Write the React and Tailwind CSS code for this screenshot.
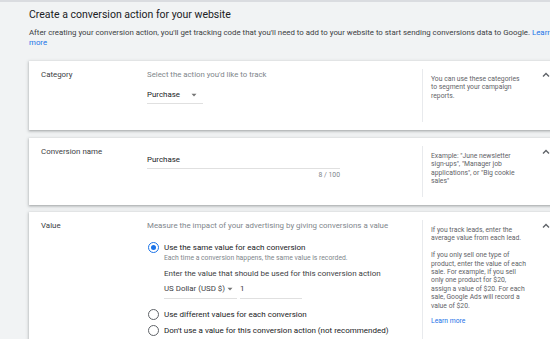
import React from "react";

function Chevron() {
  return (
    <svg width="8" height="6" viewBox="0 0 8 6" className="block">
      <polyline points="1,4.5 4,1.5 7,4.5" fill="none" stroke="#5f6368" strokeWidth="1.4" />
    </svg>
  );
}

function Caret() {
  return (
    <svg width="6" height="4" viewBox="0 0 6 4" className="block">
      <polygon points="0.5,0.8 5.5,0.8 3,3.4" fill="#757575" />
    </svg>
  );
}

function Radio({ checked }) {
  return checked ? (
    <span className="flex h-[11px] w-[11px] shrink-0 items-center justify-center rounded-full border-[1.5px] border-[#1a73e8]">
      <span className="h-[5px] w-[5px] rounded-full bg-[#1a73e8]" />
    </span>
  ) : (
    <span className="h-[11px] w-[11px] shrink-0 rounded-full border-[1.5px] border-[#5f6368]" />
  );
}

function Card({ label, children, help, className }) {
  return (
    <div
      className={
        "flex w-[560px] bg-white shadow-[0_1px_2px_rgba(60,64,67,0.3),0_1px_3px_1px_rgba(60,64,67,0.15)] " +
        className
      }
    >
      <div className="w-[118px] shrink-0 pl-[12px] pt-[9px] text-[7.9px] leading-[10px] text-[#3c4043]">{label}</div>
      <div className="w-[275px] shrink-0">{children}</div>
      <div className="my-[8px] w-[112px] shrink-0 border-l border-[#e8eaed] pl-[8px] pt-[6px] text-[6.8px] leading-[8.4px] text-[#5f6368]">
        {help}
      </div>
      <div className="pl-[8px] pt-[11px]">
        <Chevron />
      </div>
    </div>
  );
}

export default function App() {
  return (
    <div className="h-[339px] w-[550px] overflow-hidden bg-[#f1f3f4] font-['Roboto',sans-serif]">
      <div className="h-[2px] bg-[#dadce0]" />
      <div className="pl-[29px]">
        <h1 className="pt-[6px] text-[10.5px] leading-[14px] text-[#202124]">
          Create a conversion action for your website
        </h1>
        <p className="mt-[6px] whitespace-nowrap text-[7.85px] leading-[10px] text-[#3c4043]">
          After creating your conversion action, you'll get tracking code that you'll need to add to your website to start sending conversions data to Google.{" "}
          <span className="text-[#1a73e8]">Learn</span>
          <br />
          <span className="text-[#1a73e8]">more</span>
        </p>

        <Card
          className="mt-[13px] h-[69px]"
          label="Category"
          help={
            <>
              You can use these categories
              <br />
              to segment your campaign
              <br />
              reports.
            </>
          }
        >
          <div className="pt-[9px] text-[7.8px] leading-[10px] text-[#80868b]">
            Select the action you'd like to track
          </div>
          <div className="mt-[10px] flex w-[56px] items-center gap-[11px] border-b border-[#e0e0e0] pb-[3px] text-[7.9px] leading-[10px] text-[#202124]">
            <span>Purchase</span>
            <Caret />
          </div>
        </Card>

        <Card
          className="mt-[8px] h-[67px]"
          label="Conversion name"
          help={
            <>
              Example: "June newsletter
              <br />
              sign-ups", "Manager job
              <br />
              applications", or "Big cookie
              <br />
              sales"
            </>
          }
        >
          <div className="w-[193px] pt-[17px]">
            <div className="border-b border-[#e0e0e0] pb-[3px] text-[7.9px] leading-[10px] text-[#202124]">Purchase</div>
            <div className="pt-[1px] text-right text-[6.8px] leading-[10px] text-[#80868b]">8 / 100</div>
          </div>
        </Card>

        <Card
          className="mt-[7px] h-[140px]"
          label="Value"
          help={
            <>
              If you track leads, enter the
              <br />
              average value from each lead.
              <div className="h-[8.4px]" />
              If you only sell one type of
              <br />
              product, enter the value of each
              <br />
              sale. For example, if you sell
              <br />
              only one product for $20,
              <br />
              assign a value of $20. For each
              <br />
              sale, Google Ads will record a
              <br />
              value of $20.
              <div className="mt-[7px] text-[#1a73e8]">Learn more</div>
            </>
          }
        >
          <div className="pt-[9px] text-[7.9px] leading-[10px] text-[#80868b]">
            Measure the impact of your advertising by giving conversions a value
          </div>
          <div className="mt-[11px] flex items-center gap-[5px] pl-[1px]">
            <Radio checked />
            <span className="whitespace-nowrap text-[8px] leading-[10px] text-[#202124]">
              Use the same value for each conversion
            </span>
          </div>
          <div className="pl-[17px]">
            <div className="pt-[1px] text-[6.8px] leading-[9px] text-[#80868b]">
              Each time a conversion happens, the same value is recorded.
            </div>
            <div className="mt-[6px] whitespace-nowrap text-[8px] leading-[10px] text-[#3c4043]">
              Enter the value that should be used for this conversion action
            </div>
            <div className="mt-[5px] flex items-end gap-[3px]">
              <div className="flex w-[73px] items-center justify-between border-b border-[#e0e0e0] pb-[4px] pr-[4px] text-[7.9px] leading-[10px] text-[#3c4043]">
                <span>US Dollar (USD $)</span>
                <Caret />
              </div>
              <div className="w-[62px] border-b border-[#e0e0e0] pb-[4px] text-[7.9px] leading-[10px] text-[#3c4043]">1</div>
            </div>
          </div>
          <div className="mt-[10px] flex items-center gap-[5px] pl-[1px]">
            <Radio />
            <span className="whitespace-nowrap text-[8px] leading-[10px] text-[#202124]">
              Use different values for each conversion
            </span>
          </div>
          <div className="mt-[5px] flex items-center gap-[5px] pl-[1px]">
            <Radio />
            <span className="whitespace-nowrap text-[8px] leading-[10px] text-[#202124]">
              Don't use a value for this conversion action (not recommended)
            </span>
          </div>
        </Card>
      </div>
    </div>
  );
}
